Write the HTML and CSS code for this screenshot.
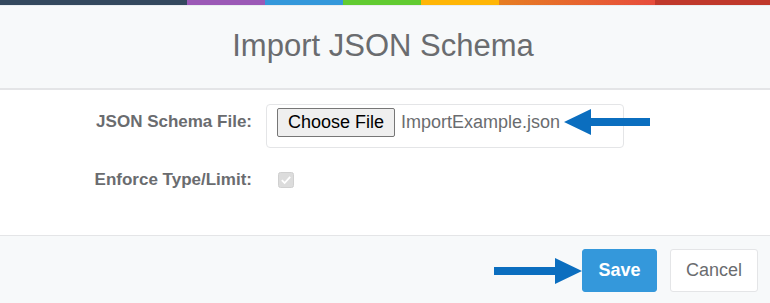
FILE: index.html
```html
<!DOCTYPE html>
<html>
<head>
<meta charset="utf-8">
<link rel="stylesheet" href="styles.css">
</head>
<body>
<div class="modal">
  <div class="color-line">
    <span class="c1"></span><span class="c2"></span><span class="c3"></span><span class="c4"></span><span class="c5"></span><span class="c6"></span><span class="c7"></span>
  </div>
  <div class="modal-header">
    <h4 class="title">Import JSON Schema</h4>
  </div>
  <div class="modal-body">
    <div class="row">
      <label class="label">JSON Schema File:</label>
      <div class="file-box">
        <span class="file-btn">Choose File</span>
        <span class="file-name">ImportExample.json</span>
        <svg class="arrow-left" width="86" height="26" viewBox="0 0 86 26">
          <polygon points="0,13 27,0 27,9 86,9 86,17 27,17 27,26" fill="#0b6ebf"/>
        </svg>
      </div>
    </div>
    <div class="row row-check">
      <label class="label">Enforce Type/Limit:</label>
      <span class="check">
        <svg width="16" height="16" viewBox="0 0 16 16">
          <rect x="0.5" y="0.5" width="15" height="15" rx="2" fill="#dcdcdc" stroke="#d0d0d0"/>
          <path d="M3.8 8.2 L6.6 11 L12.2 4.8" stroke="#fff" stroke-width="1.8" fill="none"/>
        </svg>
      </span>
    </div>
  </div>
  <div class="modal-footer">
    <svg class="arrow-right" width="88" height="26" viewBox="0 0 88 26">
      <polygon points="88,13 61,0 61,9 0,9 0,17 61,17 61,26" fill="#0b6ebf"/>
    </svg>
    <button class="btn btn-primary">Save</button>
    <button class="btn btn-default">Cancel</button>
  </div>
</div>
</body>
</html>
```
FILE: styles.css
```css
html, body {
  margin: 0;
  padding: 0;
  background: #ffffff;
}
body {
  font-family: "Liberation Sans", Arial, sans-serif;
  color: #6a6c6f;
  width: 770px;
  height: 303px;
  overflow: hidden;
}
.modal {
  display: flex;
  flex-direction: column;
  height: 303px;
}
.color-line {
  display: flex;
  height: 5px;
  border-bottom: 1px solid #e9edf0;
}
.color-line span { display: block; height: 5px; }
.c1 { width: 187px; background: #34495e; }
.c2 { width: 78px; background: #9b59b6; }
.c3 { width: 78px; background: #3498db; }
.c4 { width: 78px; background: #62cb31; }
.c5 { width: 78px; background: #ffb606; }
.c6 { width: 156px; background: linear-gradient(to right, #e67e22, #e74c3c); }
.c7 { flex: 1; background: #c0392b; }
.modal-header {
  background: #f7f9fa;
  height: 82px;
  border-bottom: 2px solid #e4e5e7;
  display: flex;
  align-items: center;
  justify-content: center;
}
.title {
  margin: 0;
  font-weight: 400;
  font-size: 31px;
  color: #6a6c6f;
  padding-bottom: 2px;
  padding-right: 4px;
}
.modal-body {
  height: 145px;
  padding-top: 14px;
  box-sizing: border-box;
}
.row {
  display: flex;
  align-items: flex-start;
}
.label {
  width: 266px;
  text-align: right;
  font-weight: 700;
  font-size: 17px;
  color: #6a6c6f;
  padding-right: 14px;
  box-sizing: border-box;
  line-height: 20px;
  padding-top: 8px;
}
.file-box {
  width: 358px;
  height: 44px;
  border: 1px solid #e4e5e7;
  border-radius: 4px;
  box-sizing: border-box;
  display: flex;
  align-items: flex-start;
  padding-left: 10px;
  padding-top: 3px;
  position: relative;
}
.file-btn {
  display: inline-block;
  height: 29px;
  line-height: 27px;
  box-sizing: border-box;
  padding: 0 10px;
  border: 1px solid #767676;
  border-radius: 2px;
  background: #efefef;
  color: #000;
  font-size: 18px;
}
.file-name {
  margin-left: 6px;
  font-size: 18px;
  line-height: 29px;
  color: #6a6c6f;
}
.arrow-left {
  position: absolute;
  left: 297px;
  top: 4px;
}
.row-check {
  margin-top: 22px;
  align-items: center;
}
.row-check .label {
  padding-top: 0;
}
.check {
  display: inline-flex;
  margin-left: 12px;
}
.modal-footer {
  flex: 1;
  background: #f7f9fa;
  border-top: 1px solid #e4e5e7;
  display: flex;
  align-items: center;
  justify-content: flex-end;
  padding-right: 12px;
  padding-top: 2px;
  gap: 13px;
}
.arrow-right {
  margin-right: -13px;
}
.btn {
  height: 43px;
  border-radius: 3px;
  font-family: "Liberation Sans", Arial, sans-serif;
  font-size: 18px;
  cursor: pointer;
  padding: 0;
}
.btn-primary {
  width: 75px;
  background: #3498db;
  border: 1px solid #3498db;
  color: #fff;
  font-weight: 700;
}
.btn-default {
  width: 88px;
  background: #fff;
  border: 1px solid #e4e5e7;
  color: #6a6c6f;
}
```
